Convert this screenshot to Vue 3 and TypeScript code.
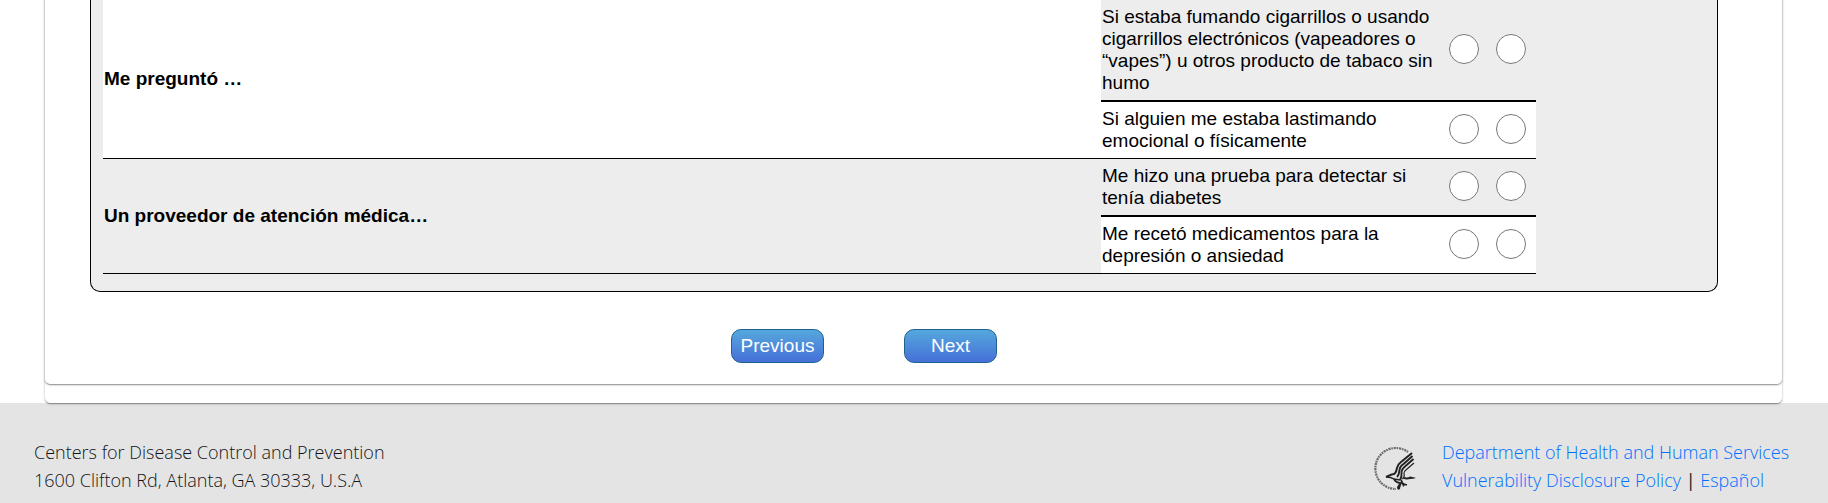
<script setup lang="ts">
import { reactive } from 'vue'

interface Item {
  id: string
  text: string
}
interface Group {
  label: string
  items: Item[]
}

const groups: Group[] = [
  {
    label: 'Me preguntó …',
    items: [
      {
        id: 'tabaco',
        text: 'Si estaba fumando cigarrillos o usando cigarrillos electrónicos (vapeadores o “vapes”) u otros producto de tabaco sin humo',
      },
      { id: 'violencia', text: 'Si alguien me estaba lastimando emocional o físicamente' },
    ],
  },
  {
    label: 'Un proveedor de atención médica…',
    items: [
      { id: 'diabetes', text: 'Me hizo una prueba para detectar si tenía diabetes' },
      { id: 'depresion', text: 'Me recetó medicamentos para la depresión o ansiedad' },
    ],
  },
]

const choices = ['No', 'Sí']
const answers = reactive<Record<string, string>>({})
</script>

<template>
  <div class="page">
    <div class="shell card">
      <main class="card body">
        <section class="panel">
          <table class="matrix">
            <colgroup>
              <col />
              <col class="col-text" />
              <col class="col-choice" />
              <col class="col-choice" />
            </colgroup>
            <tbody v-for="(group, g) in groups" :key="group.label">
              <tr v-for="(item, i) in group.items" :key="item.id" :class="i % 2 ? 'plain' : 'shaded'">
                <th
                  v-if="i === 0"
                  scope="rowgroup"
                  :rowspan="group.items.length"
                  :class="g % 2 ? 'shaded' : 'plain'"
                >
                  {{ group.label }}
                </th>
                <td :id="item.id" class="question">{{ item.text }}</td>
                <td v-for="choice in choices" :key="choice" class="choice">
                  <input
                    v-model="answers[item.id]"
                    type="radio"
                    :name="item.id"
                    :value="choice"
                    :aria-label="choice"
                    :aria-describedby="item.id"
                  />
                </td>
              </tr>
            </tbody>
          </table>
        </section>
        <div class="actions">
          <button type="button">Previous</button>
          <button type="button">Next</button>
        </div>
      </main>
    </div>
    <footer class="footer">
      <address>
        Centers for Disease Control and Prevention<br />
        1600 Clifton Rd, Atlanta, GA 30333, U.S.A
      </address>
      <div class="agency">
        <svg class="seal" viewBox="0 0 44 46" aria-hidden="true">
          <g fill="none" stroke="#444">
            <path d="M35 6A20.500 20.500 0 1 0 23 43" stroke-width="2.200" stroke-dasharray="1.600 .7 2.200 .8" opacity=".75" />
          </g>
          <g fill="none" stroke="#222" stroke-linejoin="round">
            <path d="M13 31q6-3 8-3q2-1 3-6q1-4 4-6l11-9" stroke-width="2" />
            <path d="M13 31q5 0 8 2l6 1" stroke-width="1.500" />
            <path d="M24 31q2-2 2.500-7q.5-4 4-6l9-8" stroke-width="1.900" />
            <path d="M27 34q2-3 1.500-7q0-4 4-7l8-7" stroke-width="1.900" />
            <path d="M29 33q3-2 2-5q0-3 3-5l7-6" stroke-width="1.200" />
            <path d="M21 33q2 4 7 4l-2 4M28 34l2 4 4 1" stroke-width="1.700" />
          </g>
          <path d="M30 31q5 1 7-.5q4 .5 6 1.500q-3 1-6 1q-4 1-7-.5zM24 41q1-3 4-4l-1 6q-3 2-3-2zM29 37l4 1-3 3z" fill="#222" />
        </svg>
        <nav>
          <a href="#hhs">Department of Health and Human Services</a><br />
          <a href="#policy">Vulnerability Disclosure Policy</a> <span class="bar">|</span> <a href="#es">Español</a>
        </nav>
      </div>
    </footer>
  </div>
</template>

<style>
body {
  margin: 0;
  background: #fff;
}
</style>

<style scoped>
.page {
  font-family: 'Liberation Sans', Arial, sans-serif;
  font-size: 19px;
  line-height: 22px;
  color: #000;
}
.card {
  background: #fff;
  border-radius: 0 0 5px 5px;
  box-shadow: 0 1px 3px rgba(0, 0, 0, 0.2), 0 1px 1px rgba(0, 0, 0, 0.3);
}
.shell {
  position: relative;
  margin: -4px 46px 0 45px;
  padding-bottom: 19px;
}
.body {
  padding: 4px 64px 21px 45px;
}
.panel {
  padding: 0 181px 17px 12px;
  background: #ededed;
  border: 1px solid #000;
  border-top: 0;
  border-radius: 0 0 10px 10px;
}
.matrix {
  width: 100%;
  table-layout: fixed;
  border-spacing: 0;
}
.col-text {
  width: 341px;
}
.col-choice {
  width: 47px;
}
th {
  padding: 0 1px;
  text-align: left;
  border-bottom: 1px solid #000;
}
.plain {
  background: #fff;
}
.shaded {
  background: #ededed;
}
td {
  border-bottom: 2px solid #000;
}
tr:last-child td {
  border-bottom-width: 1px;
}
.question {
  padding: 6px 1px;
}
.choice {
  padding: 0 4px 3px 0;
}
.choice input {
  display: block;
  width: 30px;
  height: 30px;
  margin: 0 auto;
}
.actions {
  display: flex;
  justify-content: center;
  gap: 80px;
  padding: 37px 80px 0 0;
}
button {
  width: 93px;
  height: 34px;
  padding: 0;
  font: inherit;
  color: #fff;
  background: linear-gradient(#55a8dd, #4670d8);
  border: 1px solid #1f628d;
  border-radius: 10px;
  cursor: pointer;
}
.footer {
  display: flex;
  justify-content: space-between;
  padding: 35px 34px 9px;
  background: #e4e4e4;
  color: #111418;
  font-family: 'Segoe UI', 'Open Sans', 'Noto Sans', sans-serif;
  font-size: 18px;
  font-weight: 300;
  line-height: 28px;
}
address {
  font-style: normal;
}
.agency {
  display: flex;
  gap: 25px;
}
nav {
  min-width: 352px;
}
.seal {
  width: 44px;
  height: 46px;
  margin-top: 8px;
}
.bar {
  font-weight: 400;
}
a {
  color: #0070ff;
  text-decoration: none;
}
</style>
